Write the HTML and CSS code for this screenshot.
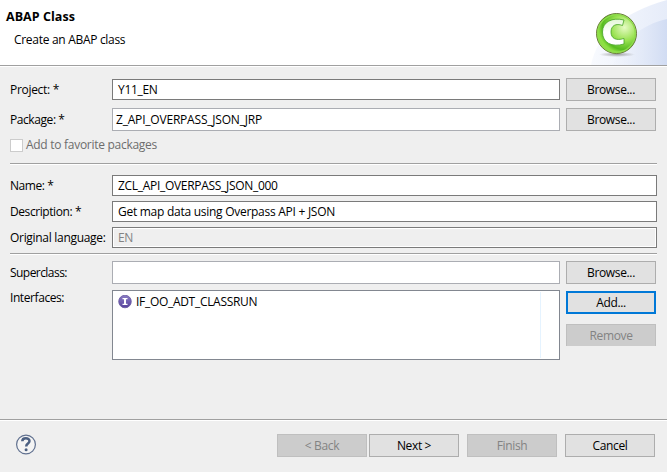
FILE: index.html
```html
<!DOCTYPE html>
<html lang="en">
<head>
<meta charset="utf-8">
<title>ABAP Class</title>
<link rel="stylesheet" href="styles.css">
</head>
<body>
<main class="wizard">
  <header class="banner">
    <div class="heading">
      <h1>ABAP Class</h1>
      <p>Create an ABAP class</p>
    </div>
    <svg class="art" width="127" height="65" viewBox="0 0 127 65">
      <defs>
        <linearGradient id="sweep" x1="0" y1="0" x2="1" y2="0"><stop offset="0" stop-color="#f8fafe"/><stop offset="1" stop-color="#e6ecf9"/></linearGradient>
        <linearGradient id="sweep2" x1="0" y1="0" x2="1" y2="0"><stop offset="0" stop-color="#eef2fb" stop-opacity=".3"/><stop offset="1" stop-color="#d1dcf3"/></linearGradient>
        <radialGradient id="ball" cx=".7" cy=".35" r=".65"><stop offset="0" stop-color="#e6fbc4"/><stop offset=".5" stop-color="#9ae252"/><stop offset=".85" stop-color="#57bb20"/><stop offset="1" stop-color="#8ee043"/></radialGradient>
        <linearGradient id="letter" x1="0" y1="0" x2="0" y2="1"><stop offset="0" stop-color="#e3f7d5"/><stop offset=".5" stop-color="#fff"/></linearGradient>
        <radialGradient id="shade"><stop offset="0" stop-color="#777" stop-opacity=".65"/><stop offset="1" stop-color="#777" stop-opacity="0"/></radialGradient>
      </defs>
      <path d="M51 65C57 35 81 13 127 0V65Z" fill="url(#sweep)"/>
      <path d="M73 65C80 43 100 25 127 19V65Z" fill="url(#sweep2)"/>
      <ellipse cx="77" cy="54.500" rx="18" ry="2.5" fill="url(#shade)"/>
      <circle cx="76.500" cy="33.500" r="20" fill="url(#ball)" stroke="#6a7a3c"/>
      <circle cx="76.500" cy="33.500" r="18.700" fill="none" stroke="#8fdc4d" stroke-width="1.200"/>
      <path d="M84 20C72 17 62.500 22 62.500 32C62.500 43 72 47.500 84 44V38.500C76 41 71 38.500 71 32C71 25.500 76 23 82.500 25.500Z" fill="url(#letter)" stroke="#45a524" stroke-width=".8"/>
    </svg>
  </header>

  <section class="form">
    <div class="row project"><label>Project: *</label><div class="field"><span>Y11_EN</span></div><button>Browse...</button></div>
    <div class="row package"><label class="narrow">Package: *</label><div class="field light tall"><span class="wide">Z_API_OVERPASS_JSON_JRP</span></div><button>Browse...</button></div>
    <div class="check"><i></i><span>Add to favorite packages</span></div>
    <div class="rule"></div>
    <div class="row name"><label class="narrow">Name: *</label><div class="field"><span>ZCL_API_OVERPASS_JSON_000</span></div></div>
    <div class="row desc"><label class="narrow">Description: *</label><div class="field"><span class="sentence">Get map data using Overpass API + JSON</span></div></div>
    <div class="row lang"><label>Original language:</label><div class="field off"><span>EN</span></div></div>
    <div class="rule"></div>
    <div class="row super"><label class="tight">Superclass:</label><div class="field light tall"></div><button>Browse...</button></div>
    <div class="row interfaces"><label class="narrow">Interfaces:</label>
      <div class="list"><div class="item">
        <svg width="14" height="14" viewBox="0 0 14 14"><defs><linearGradient id="purple" x1="0" y1="0" x2="0" y2="1"><stop offset="0" stop-color="#8a7cc4"/><stop offset="1" stop-color="#57439c"/></linearGradient></defs><circle cx="7" cy="6.500" r="6.300" fill="url(#purple)" stroke="#67579f" stroke-width=".8"/><path d="M4.500 3H9.500V4.300H8V8.700H9.500V10H4.500V8.700H6V4.300H4.500Z" fill="#fff"/></svg>
        <span>IF_OO_ADT_CLASSRUN</span></div></div>
      <div class="actions"><button class="focus add">Add...</button><button class="remove" disabled>Remove</button></div>
    </div>
  </section>

  <footer>
    <svg class="help" width="22" height="22" viewBox="0 0 22 22"><circle cx="11" cy="10.500" r="9.400" fill="#f4f4f4" stroke="#60708f" stroke-width="1.200"/><path d="M7.300 7.300C7.300 3.300 14.500 3.500 14.500 7C14.500 9.700 11.200 9.300 11.200 12.500" fill="none" stroke="#4c6082" stroke-width="2.500"/><circle cx="11.100" cy="15.700" r="1.500" fill="#4c6082"/></svg>
    <button class="back" disabled>&lt; Back</button><button class="next">Next &gt;</button><button class="finish" disabled>Finish</button><button class="cancel">Cancel</button>
  </footer>
</main>
</body>
</html>
```
FILE: styles.css
```css
* { box-sizing: border-box; }
body { margin: 0; background: #efefef; color: #000; font: 12px/16px "Open Sans", sans-serif; }
.wizard { width: 667px; height: 472px; display: flex; flex-direction: column; overflow: hidden; white-space: nowrap; }
.banner { height: 67px; flex: none; display: flex; justify-content: space-between; background: #fff; border-bottom: 1px solid #fff; box-shadow: inset 0 -1px #a0a0a0; }
.heading { padding: 9px 0 0 6px; }
h1 { margin: 0; font-size: 12.5px; line-height: 16px; font-weight: 700; letter-spacing: 0.05px; }
p { margin: 7px 0 0 8px; letter-spacing: -0.3px; }
.art { display: block; }
.form { flex: 1; padding: 11px 10px 0; }
.row { display: grid; grid-template-columns: 102px 448px 90px; column-gap: 0; align-items: center; height: 23px; letter-spacing: -0.3px; }
.row > button { margin-left: 6px; }
.narrow { letter-spacing: -0.42px; }
.tight { letter-spacing: -0.55px; }
.wide { letter-spacing: -0.2px; }
.sentence { letter-spacing: -0.27px; }
.field { height: 21px; border: 1px solid #7a7a7a; background: #fff; padding: 0 5px; line-height: 19px; }
.field.light { border-color: #abadb3; padding-left: 3px; }
.field.tall { height: 23px; line-height: 21px; }
.field.off { background: #efefef; color: #838383; box-shadow: inset 0 0 0 1px #fff; }
button { width: 90px; height: 23px; padding: 0; border: 1px solid #adadad; border-radius: 0; background: #e1e1e1; color: #000; font: inherit; line-height: 21px; letter-spacing: -0.35px; }
button:disabled { background: #ccc; border-color: #bfbfbf; color: #838383; }
.focus { border: 2px solid #0078d7; line-height: 19px; }
.package { margin-top: 7px; }
.check { display: flex; align-items: center; gap: 3px; height: 16px; margin-top: 6px; color: #6d6d6d; letter-spacing: -0.28px; }
.check i { width: 13px; height: 13px; background: #fff; border: 1px solid #ccc; }
.rule { width: 647px; height: 2px; margin-top: 10px; background: #fff; border-top: 1px solid #a0a0a0; }
.name, .desc, .lang { grid-template-columns: 102px 545px; height: 21px; }
.name { margin-top: 10px; }
.desc, .lang { margin-top: 5px; }
.lang + .rule { margin-top: 5px; }
.super { margin-top: 6px; }
.interfaces { height: 70px; margin-top: 6px; align-items: start; }
.list { height: 70px; padding: 3px 5px; border: 1px solid #828790; background: linear-gradient(#e5f3ff, #e5f3ff) 427px 1px / 1px 66px no-repeat #fff; }
.item { display: flex; align-items: center; gap: 4px; }
.actions { display: flex; flex-direction: column; gap: 10px; padding: 1px 0 0 6px; }
.remove { height: 22px; border-bottom: 0; }
footer { height: 53px; flex: none; display: flex; align-items: flex-start; padding: 14px 12px 0 15px; border-top: 1px solid #a0a0a0; box-shadow: inset 0 1px #fff; }
.help { margin: 0 auto 0 0; }
.next { margin-left: 2px; }
.finish, .cancel { margin-left: 8px; }
```
